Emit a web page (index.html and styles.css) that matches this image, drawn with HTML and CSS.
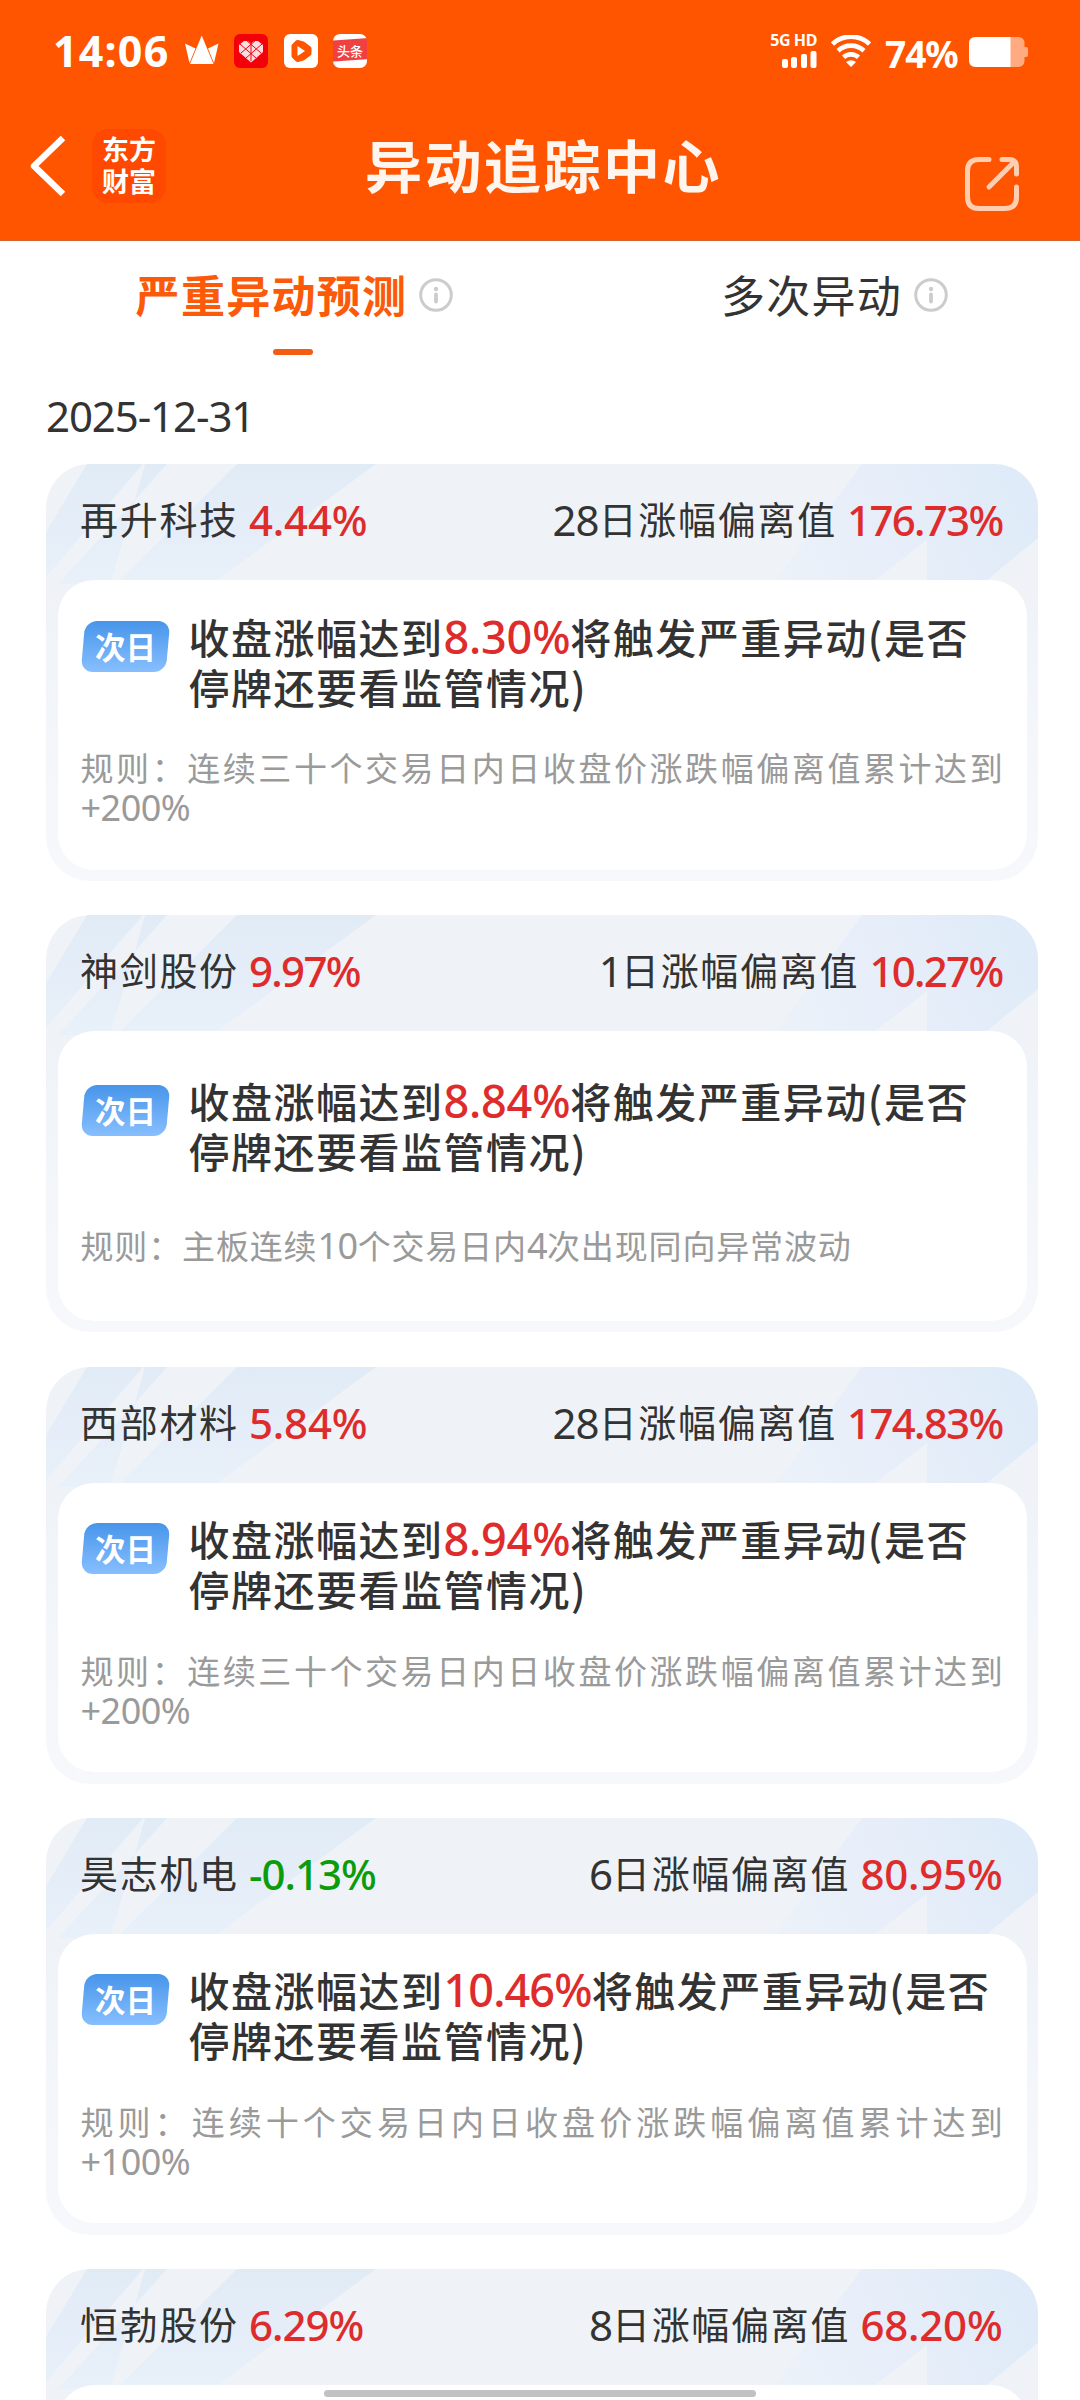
FILE: index.html
```html
<!DOCTYPE html>
<html lang="zh-CN">
<head>
<meta charset="utf-8">
<title>异动追踪中心</title>
<link rel="stylesheet" href="styles.css">
</head>
<body>
<svg class="defs" width="0" height="0" aria-hidden="true">
  <defs>
    <linearGradient id="shade" gradientUnits="userSpaceOnUse" x1="0" y1="0" x2="0" y2="130">
      <stop offset="0" stop-color="#e1ebf6"/>
      <stop offset="1" stop-color="#e9f1fa"/>
    </linearGradient>
    <linearGradient id="shade-right" gradientUnits="userSpaceOnUse" x1="720" y1="120" x2="960" y2="0">
      <stop offset="0" stop-color="#edf2f9"/>
      <stop offset="0.5" stop-color="#e7eef9"/>
      <stop offset="1" stop-color="#dfebf8"/>
    </linearGradient>
    <symbol id="rays" viewBox="0 0 992 200">
      <path fill="url(#shade)" d="M41 0H97L0 113V68Z"/>
      <path fill="url(#shade)" d="M99 0H121L89 36Z"/>
      <path fill="url(#shade)" d="M89 36L64 120H12Z"/>
      <path fill="url(#shade)" d="M191 0H330L166 120H70Z"/>
      <path fill="url(#shade-right)" d="M816 0H992V74L936 120H881V76L824 120H727Z"/>
    </symbol>
    <symbol id="info" viewBox="0 0 34 34">
      <circle cx="17" cy="17" r="15.3" fill="none" stroke="#ccc" stroke-width="3"/>
      <circle cx="17" cy="11" r="2.2" fill="#ccc"/>
      <path d="M17 16.5V23.500" stroke="#ccc" stroke-width="3.800" stroke-linecap="round"/>
    </symbol>
  </defs>
</svg>
<div class="screen">
  <header class="top">
    <div class="status">
      <div class="status-left">
        <span class="clock">14:06</span>
        <svg class="s-icon" viewBox="0 0 34 34"><path fill="#fff" d="M16.700 1.500L28.500 30H5Z"/><path fill="#fff" d="M0 9.500L10.500 14.500 4.500 29ZM33.500 9.500L23 14.500 29 29Z"/></svg>
        <svg class="s-icon" viewBox="0 0 34 34"><rect width="34" height="34" rx="6" fill="#f4000b"/><path fill="#fbdde0" d="M17 28.500L5 18V11L10 7H14L17 9.500 20 7H24L29 11V18Z"/><path d="M6 10L22 24M12 6L27 19M28 10L12 24M22 6L7 19M17 9V27" stroke="#f4000b" stroke-width="1"/></svg>
        <svg class="s-icon" viewBox="0 0 34 34"><rect width="34" height="34" rx="6" fill="#fff"/><path fill="#ff5500" stroke="#ff5500" stroke-width="5" stroke-linejoin="round" d="M13.500 8.500L19 10 25 14.500V19.500L19 24 13.500 25.500 10 22V12Z"/><path fill="#fff" d="M13.500 12V22L21 17Z"/></svg>
        <span class="news"><span class="news-text">头条</span></span>
      </div>
      <div class="status-right">
        <div class="signal">
          <span class="net">5G HD</span>
          <svg width="36" height="17" viewBox="0 0 36 17"><g fill="#fff"><rect x="1" y="8" width="6" height="9" rx="2"/><rect x="10" y="6" width="6" height="11" rx="2"/><rect x="20" y="3" width="6" height="14" rx="2"/><rect x="29.500" y="0" width="6" height="17" rx="2"/></g></svg>
        </div>
        <svg class="wifi" viewBox="0 0 40 32"><g fill="none" stroke="#fff" stroke-width="4.600"><path d="M1.500 9A27 27 0 0 1 38.500 9"/><path d="M7 15.800A19 19 0 0 1 33 15.800"/><path d="M12.500 22.300A11 11 0 0 1 27.500 22.300"/></g><path fill="#fff" d="M15 27Q20 23.500 25 27L20 32Z"/></svg>
        <span class="percent">74%</span>
        <svg class="battery" viewBox="0 0 59 30"><path fill="#ffaa80" d="M41 0H49Q55.500 0 55.500 6.500V10H57Q59 10 59 12V18Q59 20 57 20H55.500V23.500Q55.500 30 49 30H41Z"/><path fill="#fff" d="M6.500 0H41.500V30H6.500Q0 30 0 23.500V6.500Q0 0 6.500 0Z"/></svg>
      </div>
    </div>
    <div class="nav">
      <div class="nav-left">
        <svg class="back" viewBox="0 0 36 62"><path d="M33 3L4 31 33 59" fill="none" stroke="#fff" stroke-width="6.500" stroke-linejoin="round"/></svg>
        <div class="logo"><span>东方</span><span>财富</span></div>
      </div>
      <h1 class="title">异动追踪中心</h1>
      <svg class="share" viewBox="0 0 54 54"><g fill="none" stroke="#ffcdb0" stroke-width="5" stroke-linecap="round"><path d="M24 2.500H14Q2.500 2.500 2.500 14V40Q2.500 51.500 14 51.500H40Q51.500 51.500 51.500 40V30"/><path d="M37 2.500H44Q51.500 2.500 51.500 10V17"/><path d="M24 30L49 5"/></g></svg>
    </div>
  </header>
  <nav class="tabs">
    <div class="tab active"><span class="tab-text">严重异动预测</span><svg class="info"><use href="#info"/></svg></div>
    <div class="tab"><span class="tab-text">多次异动</span><svg class="info"><use href="#info"/></svg></div>
  </nav>
  <div class="date">2025-12-31</div>
  <main class="list">
    <section class="card">
      <svg class="rays"><use href="#rays"/></svg>
      <div class="head"><span>再升科技 <b class="num up loose">4.44%</b></span><span><i class="num">28</i>日涨幅偏离值 <b class="num up tight">176.73%</b></span></div>
      <div class="body">
        <div class="alert"><span class="badge"><span class="badge-text">次日</span></span><p class="alert-text">收盘涨幅达到<b class="num up">8.30%</b>将触发严重异动(是否停牌还要看监管情况)</p></div>
        <p class="rule"><span class="full">规则：连续三十个交易日内日收盘价涨跌幅偏离值累计达到</span><i class="num">+200%</i></p>
      </div>
    </section>
    <section class="card">
      <svg class="rays"><use href="#rays"/></svg>
      <div class="head"><span>神剑股份 <b class="num up tight">9.97%</b></span><span><i class="num tight">1</i>日涨幅偏离值 <b class="num up tight">10.27%</b></span></div>
      <div class="body">
        <div class="alert"><span class="badge"><span class="badge-text">次日</span></span><p class="alert-text">收盘涨幅达到<b class="num up">8.84%</b>将触发严重异动(是否停牌还要看监管情况)</p></div>
        <p class="rule">规则：主板连续<i class="num">10</i>个交易日内<i class="num">4</i>次出现同向异常波动</p>
      </div>
    </section>
    <section class="card">
      <svg class="rays"><use href="#rays"/></svg>
      <div class="head"><span>西部材料 <b class="num up loose">5.84%</b></span><span><i class="num">28</i>日涨幅偏离值 <b class="num up tight">174.83%</b></span></div>
      <div class="body">
        <div class="alert"><span class="badge"><span class="badge-text">次日</span></span><p class="alert-text">收盘涨幅达到<b class="num up">8.94%</b>将触发严重异动(是否停牌还要看监管情况)</p></div>
        <p class="rule"><span class="full">规则：连续三十个交易日内日收盘价涨跌幅偏离值累计达到</span><i class="num">+200%</i></p>
      </div>
    </section>
    <section class="card">
      <svg class="rays"><use href="#rays"/></svg>
      <div class="head"><span>昊志机电 <b class="num down">-0.13%</b></span><span><i class="num">6</i>日涨幅偏离值 <b class="num up loose">80.95%</b></span></div>
      <div class="body">
        <div class="alert"><span class="badge"><span class="badge-text">次日</span></span><p class="alert-text">收盘涨幅达到<b class="num up tight">10.46%</b>将触发严重异动(是否停牌还要看监管情况)</p></div>
        <p class="rule"><span class="full">规则：连续十个交易日内日收盘价涨跌幅偏离值累计达到</span><i class="num">+100%</i></p>
      </div>
    </section>
    <section class="card">
      <svg class="rays"><use href="#rays"/></svg>
      <div class="head"><span>恒勃股份 <b class="num up">6.29%</b></span><span><i class="num">8</i>日涨幅偏离值 <b class="num up loose">68.20%</b></span></div>
      <div class="body"></div>
    </section>
  </main>
  <div class="home-bar"></div>
</div>
</body>
</html>
```
FILE: styles.css
```css
* { box-sizing: border-box; margin: 0; padding: 0; }
html, body { width: 1080px; height: 2400px; overflow: hidden; background: #fff; }
body { font-family: "Noto Sans CJK SC", sans-serif; color: #333; }
.defs { position: absolute; }
.screen { position: relative; width: 1080px; height: 2400px; overflow: hidden; }

.top { height: 241px; background: #ff5500; color: #fff; border-bottom: 1px solid #d8622c; }
.status { display: flex; justify-content: space-between; height: 102px; padding: 0 52px 0 53px; }
.status-left, .status-right { display: flex; align-items: center; }
.status-left { gap: 15.500px; }
.clock { width: 116px; font: 700 43px/50px "Noto Sans", sans-serif; white-space: nowrap; letter-spacing: 1.200px; }
.s-icon { width: 34px; height: 34px; display: block; }
.news { width: 34px; height: 34px; border-radius: 7px; overflow: hidden; background: linear-gradient(176deg, #fff 6px, #f04142 7px, #f04142 27px, #fff 28px); display: flex; align-items: center; justify-content: center; }
.news-text { font-size: 13px; font-weight: 500; line-height: 34px; white-space: nowrap; }
.status-right { align-items: flex-start; padding-top: 34px; }
.signal { display: flex; flex-direction: column; align-items: flex-end; width: 47px; }
.net { font: 700 16px/13px "Noto Sans", sans-serif; white-space: nowrap; margin-bottom: 4px; letter-spacing: -0.400px; }
.wifi { width: 40px; height: 32px; margin: 1px 0 0 14px; }
.percent { width: 84px; margin-left: 14px; font: 700 37px/40px "Noto Sans", sans-serif; letter-spacing: -1px; }
.battery { width: 59px; height: 30px; margin-top: 3px; }
.nav { display: flex; height: 138px; padding: 0 61px 0 30px; }
.nav-left { display: flex; align-items: center; width: 335px; height: 128px; }
.back { width: 36px; height: 62px; }
.logo { width: 74px; height: 74px; margin-left: 26px; border-radius: 16px; background: #ff4800; display: flex; flex-direction: column; align-items: center; justify-content: center; font-size: 27px; font-weight: 700; line-height: 32px; padding-bottom: 3px; }
.title { font-size: 57px; font-weight: 700; line-height: 122px; letter-spacing: 2.500px; white-space: nowrap; color: #fff5ef; }
.share { width: 54px; height: 54px; margin: 55px 0 0 auto; }

.tabs { display: flex; height: 127px; }
.tab { flex: 1; position: relative; display: flex; justify-content: center; height: 108px; padding-left: 49px; gap: 12px; font-size: 44px; line-height: 106px; letter-spacing: 1.300px; }
.tab.active { color: #fc5a08; font-weight: 700; }
.info { width: 34px; height: 34px; margin-top: 37px; }
.tab.active::after { content: ""; position: absolute; left: 273px; bottom: -6px; width: 40px; height: 6px; border-radius: 3px; background: #f35c12; }
.date { height: 96px; padding-left: 46px; font: 400 42px/96px "Noto Sans", sans-serif; letter-spacing: -1.100px; }

.list { display: flex; flex-direction: column; gap: 34.250px; padding: 0 42px 0 46px; }
.card { position: relative; height: 417px; flex: none; border-radius: 44px; overflow: hidden; background: linear-gradient(#eff3f8 0, #eff3f8 30%, #f7f8fb 100%); padding: 0 11.500px 11.500px; display: flex; flex-direction: column; }
.rays { position: absolute; left: 0; top: 0; width: 992px; height: 200px; }
.head { position: relative; height: 116px; padding: 0 24px 0 22.500px; display: flex; justify-content: space-between; font-size: 38px; line-height: 108px; letter-spacing: 1.700px; white-space: nowrap; }
.num { font-family: "Noto Sans", sans-serif; font-style: normal; font-size: 42px; letter-spacing: -1px; font-weight: 400; }
.head .num { line-height: 1; vertical-align: -1.500px; }
b.num { font-weight: 500; }
.num.loose { letter-spacing: -0.200px; }
.num.tight { letter-spacing: -1.700px; }
.up { color: #de2c2c; }
.down { color: #0a9c0a; }
.body { position: relative; flex: 1; border-radius: 36px; background: #fff; padding: 0 23px 9px; display: flex; flex-direction: column; justify-content: space-evenly; }
.alert { display: flex; height: 100px; gap: 18px; }
.badge { flex: none; width: 85px; height: 51px; margin: 7px 3px 0 2px; border-radius: 12px; transform: skewX(-5deg); background: linear-gradient(#4795ea, #87bfff); display: flex; align-items: center; justify-content: center; }
.badge-text { transform: skewX(5deg); color: #fff; font-size: 30.500px; font-weight: 700; line-height: 49px; }
.alert-text { flex: 1; margin-top: -3px; font-size: 41px; font-weight: 500; line-height: 50px; letter-spacing: 1.500px; }
.alert-text .num { font-size: 45px; line-height: 1; letter-spacing: -0.200px; }
.alert-text .num.tight { letter-spacing: -0.900px; }
.rule { font-size: 33px; line-height: 40px; letter-spacing: 0.850px; color: #9a9a9a; white-space: nowrap; }
.rule .full { display: block; white-space: normal; text-align: justify; text-align-last: justify; }
.rule .num { font-size: 36px; line-height: 1; letter-spacing: -0.500px; }
.home-bar { position: absolute; left: 324px; bottom: 3px; width: 432px; height: 7px; border-radius: 4px; background: #c1c1c1; }
```
